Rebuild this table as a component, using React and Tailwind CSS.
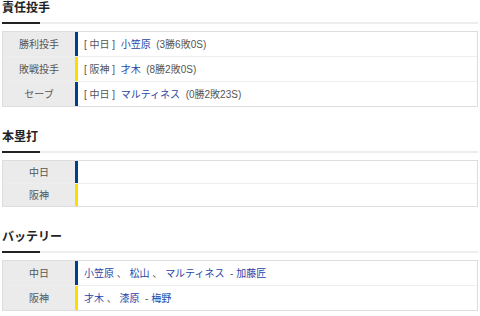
import React from "react";

const BLUE = "border-l-[#003f8e]";
const YEL = "border-l-[#ffdc00]";

function Section({ title, children, first }) {
  return (
    <div className={first ? "" : "mt-[22px]"}>
      <div className="h-4 leading-4 text-[12px] font-bold text-[#222]">{title}</div>
      <div className="mt-[6px] h-[2px] bg-[#eeeeee] w-full">
        <div className="h-[2px] w-[38px] bg-[#222]" />
      </div>
      <div className="mt-[7px] border border-[#dddddd]">{children}</div>
    </div>
  );
}

function Row({ label, bar, h, first, children }) {
  return (
    <div className={first ? "" : "border-t border-[#eeeeee]"}>
      <div className={`flex ${h}`}>
        <div className="w-[72px] shrink-0 bg-[#ebebeb] text-[#555] flex items-center justify-center text-[10px]">
          {label}
        </div>
        <div className={`flex-1 flex items-center border-l-[3px] ${bar} pl-[6px] text-[10px] text-[#555]`}>
          {children}
        </div>
      </div>
    </div>
  );
}

const L = ({ children }) => <span className="text-[#2743a6]">{children}</span>;

export default function App() {
  return (
    <div
      className="w-[480px] h-[316px] bg-white px-[2px] overflow-hidden"
      style={{ fontFamily: '"Liberation Sans", "Noto Sans CJK JP", sans-serif' }}
    >
      <Section title="責任投手" first>
        <Row label="勝利投手" bar={BLUE} h="h-[24px]" first>
          <span className="whitespace-pre">[ 中日 ]  </span>
          <L>小笠原</L>
          <span className="whitespace-pre">  (3勝6敗0S)</span>
        </Row>
        <Row label="敗戦投手" bar={YEL} h="h-[24px]">
          <span className="whitespace-pre">[ 阪神 ]  </span>
          <L>才木</L>
          <span className="whitespace-pre">  (8勝2敗0S)</span>
        </Row>
        <Row label="セーブ" bar={BLUE} h="h-[24px]">
          <span className="whitespace-pre">[ 中日 ]  </span>
          <L>マルティネス</L>
          <span className="whitespace-pre">  (0勝2敗23S)</span>
        </Row>
      </Section>
      <Section title="本塁打">
        <Row label="中日" bar={BLUE} h="h-[22px]" first />
        <Row label="阪神" bar={YEL} h="h-[22px]" />
      </Section>
      <Section title="バッテリー">
        <Row label="中日" bar={BLUE} h="h-[24px]" first>
          <L>小笠原</L>
          <span className="whitespace-pre"> 、 </span>
          <L>松山</L>
          <span className="whitespace-pre"> 、 </span>
          <L>マルティネス</L>
          <span className="whitespace-pre">  - </span>
          <L>加藤匠</L>
        </Row>
        <Row label="阪神" bar={YEL} h="h-[24px]">
          <L>才木</L>
          <span className="whitespace-pre"> 、 </span>
          <L>漆原</L>
          <span className="whitespace-pre">  - </span>
          <L>梅野</L>
        </Row>
      </Section>
    </div>
  );
}
